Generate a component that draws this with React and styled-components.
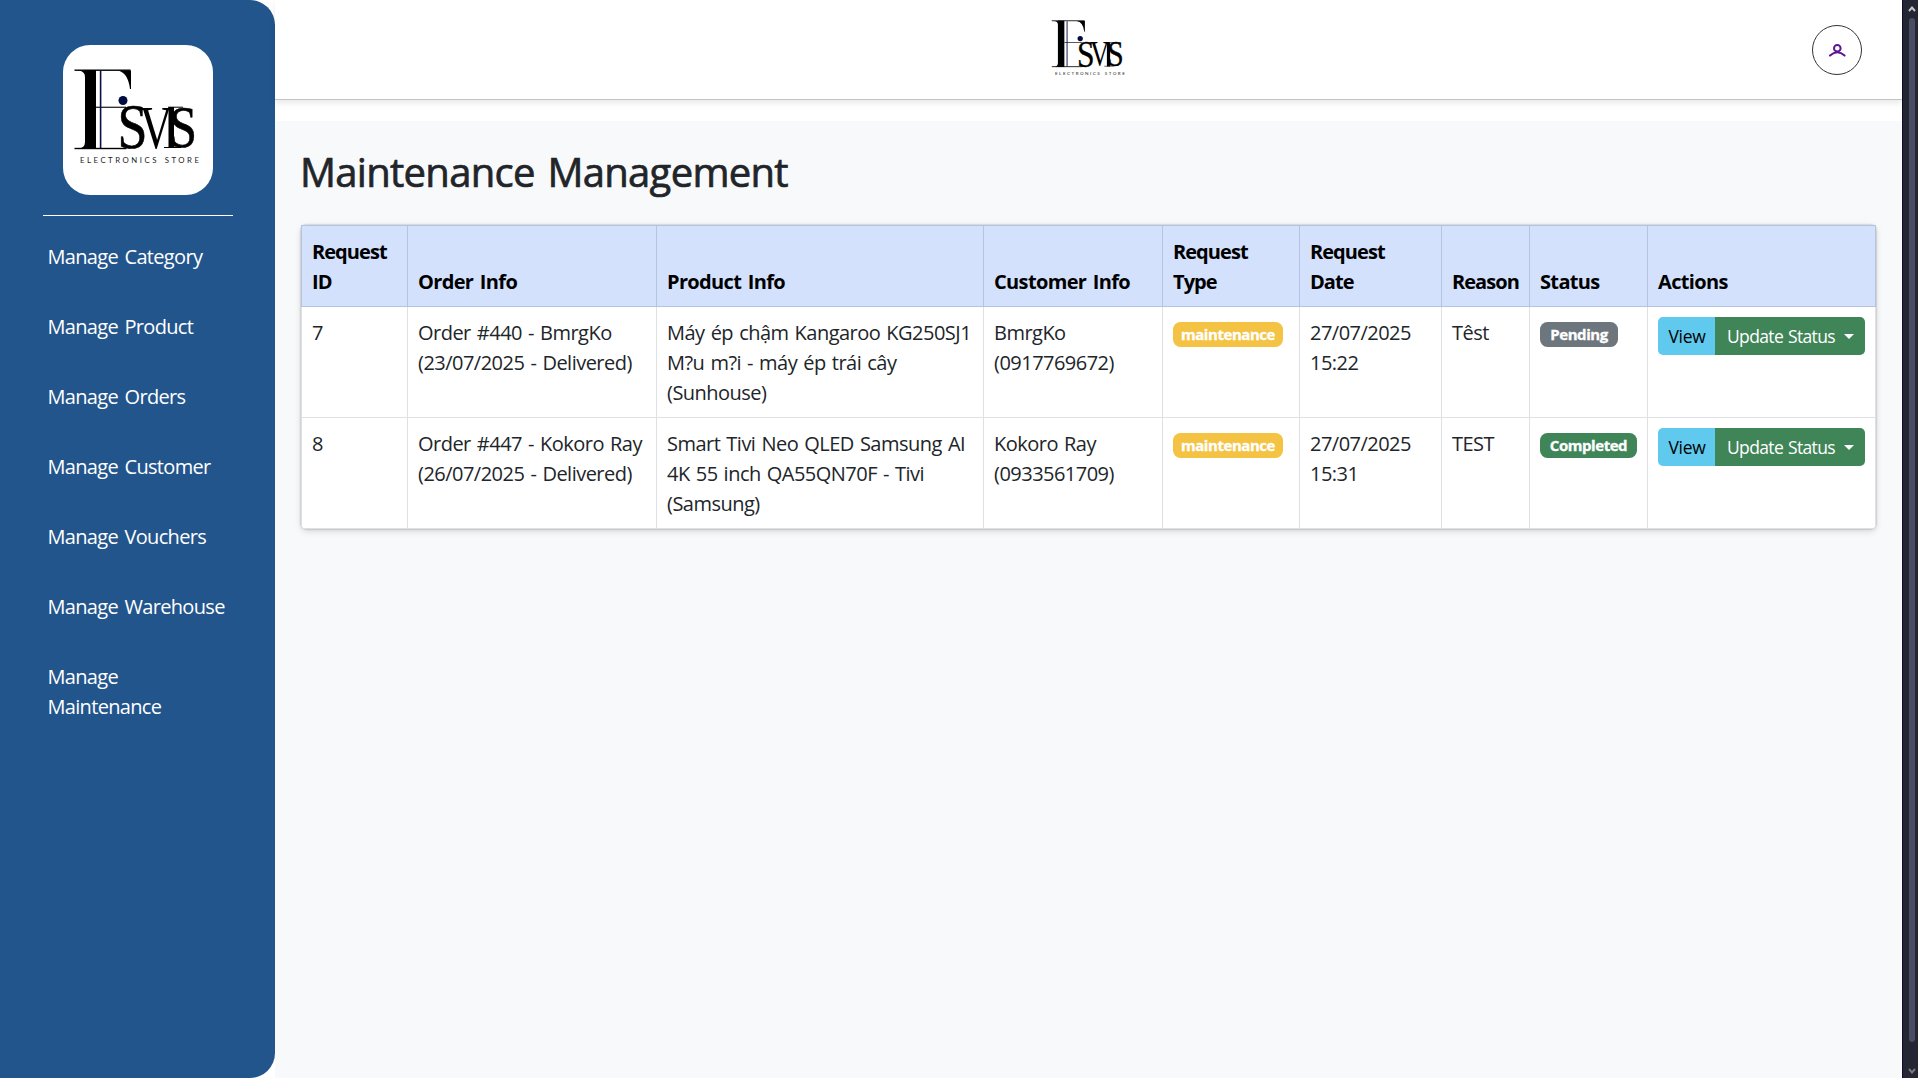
import React from 'react';
import styled, { createGlobalStyle } from 'styled-components';

const GlobalStyle = createGlobalStyle`
  * { box-sizing: border-box; }
  body {
    margin: 0;
    background: #fff;
    color: #212529;
    font: 400 20px/30px "Open Sans", "Noto Sans", sans-serif;
    letter-spacing: -0.52px;
    word-spacing: 1.4px;
    overflow: hidden;
  }
`;

const Shell = styled.div`
  display: flex;
  height: 1078px;
  width: 1918px;
`;

const Sidebar = styled.aside`
  flex: 0 0 275px;
  background: #22558c;
  border-radius: 0 25px 25px 0;
  padding: 45px 42px 0 43px;
  display: flex;
  flex-direction: column;
`;

const LogoCard = styled.div`
  width: 150px;
  height: 150px;
  margin: 0 20px;
  border-radius: 27px;
  background: #fff;
  overflow: hidden;
`;

const Divider = styled.hr`
  width: 190px;
  height: 1px;
  margin: 20px 0 6px;
  border: 0;
  background: #fff;
`;

const Nav = styled.nav`
  display: flex;
  flex-direction: column;
`;

const NavLink = styled.a`
  padding: 20px 5px 20px 4.5px;
  color: #fff;
  text-decoration: none;
  letter-spacing: -0.68px;
  word-spacing: 2px;
`;

const Page = styled.div`
  flex: 1;
  display: flex;
  flex-direction: column;
`;

const Header = styled.header`
  flex: 0 0 100px;
  display: grid;
  grid-template-columns: 1fr 88px 1fr;
  align-items: center;
  background: #fff;
  border-bottom: 1px solid #c4c6c6;
  box-shadow: 0 3px 6px rgba(0, 0, 0, 0.09);
  padding: 0 40px;
`;

const HeaderLogo = styled.div`
  grid-column: 2;
  display: flex;
`;

const UserButton = styled.a`
  justify-self: end;
  width: 50px;
  height: 50px;
  border: 1px solid #333;
  border-radius: 50%;
  display: flex;
  align-items: center;
  justify-content: center;
`;

const Content = styled.main`
  flex: 1;
  margin-top: 21px;
  padding: 27px 26px;
  background: #f8f9fb;
`;

const Title = styled.h1`
  margin: 0 0 29px -1px;
  font-size: 40px;
  line-height: 48px;
  font-weight: 500;
  letter-spacing: -0.7px;
  word-spacing: 3px;
  -webkit-text-stroke: 0.7px #212529;
`;

const Card = styled.div`
  width: 1575px;
  border-radius: 5px;
  background: #fff;
  box-shadow: 0 0 2px rgba(0, 0, 0, 0.38), 0 3px 6px rgba(0, 0, 0, 0.1), 0 0 10px rgba(0, 0, 0, 0.04);
`;

const Table = styled.table`
  width: 1575px;
  table-layout: fixed;
  border-collapse: separate;
  border-spacing: 0;
`;

const Col = styled.col`
  width: ${(p) => p.$w}px;
`;

const HeadCell = styled.th`
  height: 82px;
  padding: 11px 10px 9px 10px;
  text-align: left;
  vertical-align: bottom;
  font-weight: 700;
  letter-spacing: ${(p) => (p.$tight ? '-0.95px' : '-0.65px')};
  word-spacing: 2px;
  color: #000;
  background: #d3e1fd;
  border: solid #b4c3e0;
  border-width: 1px 1px 1px 0;
  &:first-child { border-left-width: 1px; }
`;

const Cell = styled.td`
  height: 111px;
  padding: ${(p) => (p.$controls ? '10px 0 10px 10px' : '11px 0 9px 10px')};
  vertical-align: top;
  white-space: pre-line;
  border: solid #dee0e3;
  border-width: 0 1px 1px 0;
  &:first-child { border-left-width: 1px; }
`;

const tones = { warning: '#f5c344', muted: '#6d757d', success: '#408558' };

const Badge = styled.span`
  display: flex;
  align-items: center;
  justify-content: center;
  width: ${(p) => p.$w}px;
  height: 25px;
  margin-top: 5px;
  border-radius: 7.5px;
  background: ${(p) => tones[p.$tone]};
  color: #fff;
  font-size: 15px;
  font-weight: 700;
  line-height: 15px;
  letter-spacing: -0.45px;
  -webkit-text-stroke: 0.3px #fff;
`;

const ButtonGroup = styled.div`
  display: flex;
  width: 207px;
  height: 38px;
  border-radius: 5px;
  overflow: hidden;
`;

const ViewButton = styled.button`
  width: 57px;
  padding: 0 0 0 1px;
  border: 0;
  background: #5fc9ee;
  color: #000;
  font: inherit;
  font-size: 17.5px;
  letter-spacing: -0.3px;
`;

const UpdateButton = styled(ViewButton)`
  width: 150px;
  padding: 0 11px 0 12px;
  display: flex;
  align-items: center;
  justify-content: space-between;
  background: #408558;
  color: #fff;
  letter-spacing: -0.65px;
  word-spacing: 1px;
`;

const Caret = styled.span`
  border: 5px solid transparent;
  border-top-color: #fff;
  border-bottom: 0;
`;

const Scrollbar = styled.div`
  flex: 0 0 16px;
  display: flex;
  flex-direction: column;
  align-items: center;
  padding: 5px 0 3px 2px;
  background: #242733;
  border-left: 1px solid #0b0d24;
`;

const Thumb = styled.div`
  width: 6px;
  height: 1024px;
  margin: 5px 0 auto;
  border-radius: 3px;
  background: #494d64;
`;

function Logo({ size }) {
  return (
    <svg width={size} height={size} viewBox="0 0 150 150" fill="#000">
      <rect x="22" y="25" width="11" height="79" />
      <rect x="11.5" y="24.5" width="56" height="1.4" />
      <rect x="11.5" y="102.8" width="52" height="1.4" />
      <rect x="33" y="61.7" width="30" height="1.1" />
      <path d="M15 25.5Q22 26 22 32V25.5ZM15 103.5Q22 103 22 97V103.5ZM54 25.5Q65 27 67 44H68V25.5Z" />
      <rect x="36.8" y="26" width="1.6" height="77" fill="#0a0f4a" />
      <circle cx="60" cy="55.5" r="4.5" fill="#030c40" />
      <g fontFamily="Liberation Serif, serif" stroke="#000" letterSpacing="0">
        <text x="54.5" y="103.3" fontSize="63" strokeWidth="0.6" textLength="30" lengthAdjust="spacingAndGlyphs">S</text>
        <text x="76.5" y="102.5" fontSize="61" strokeWidth="0" textLength="33" lengthAdjust="spacingAndGlyphs">V</text>
        <text x="106" y="102" fontSize="60" strokeWidth="0.6" textLength="28" lengthAdjust="spacingAndGlyphs">S</text>
      </g>
      <rect x="105.5" y="62" width="5.5" height="41" />
      <rect x="101" y="102" width="17" height="1" />
      <rect x="105" y="61.7" width="15" height="1" />
      <text x="17" y="117.5" fontFamily="Lato, sans-serif" fontSize="7.8" textLength="120" letterSpacing="1" fill="#222">
        ELECTRONICS STORE
      </text>
    </svg>
  );
}

const navItems = ['Category', 'Product', 'Orders', 'Customer', 'Vouchers', 'Warehouse', 'Maintenance'];

const columns = [
  ['Request ID', 107, true],
  ['Order Info', 249],
  ['Product Info', 327],
  ['Customer Info', 179],
  ['Request Type', 137, true],
  ['Request Date', 142, true],
  ['Reason', 88, true],
  ['Status', 118],
  ['Actions', 228],
];

const requests = [
  {
    id: 7,
    order: 'Order #440 - BmrgKo\n(23/07/2025 - Delivered)',
    product: 'Máy ép chậm Kangaroo KG250SJ1\nM?u m?i - máy ép trái cây\n(Sunhouse)',
    customer: 'BmrgKo\n(0917769672)',
    date: '27/07/2025\n15:22',
    reason: 'Têst',
    status: 'Pending',
    tone: 'muted',
    statusWidth: 78,
  },
  {
    id: 8,
    order: 'Order #447 - Kokoro Ray\n(26/07/2025 - Delivered)',
    product: 'Smart Tivi Neo QLED Samsung AI\n4K 55 inch QA55QN70F - Tivi\n(Samsung)',
    customer: 'Kokoro Ray\n(0933561709)',
    date: '27/07/2025\n15:31',
    reason: 'TEST',
    status: 'Completed',
    tone: 'success',
    statusWidth: 97,
  },
];

export default function App() {
  return (
    <Shell>
      <GlobalStyle />
      <Sidebar>
        <LogoCard><Logo size={150} /></LogoCard>
        <Divider />
        <Nav>
          {navItems.map((n) => <NavLink key={n}>Manage {n}</NavLink>)}
        </Nav>
      </Sidebar>
      <Page>
        <Header>
          <HeaderLogo><Logo size={88} /></HeaderLogo>
          <UserButton>
            <svg width="20" height="20" viewBox="0 0 20 20" fill="none" stroke="#5b1496" strokeWidth="2" strokeLinecap="round">
              <circle cx="10.3" cy="8.3" r="3.3" />
              <path d="M3 15.6Q10.3 8.8 17.6 15.6" />
            </svg>
          </UserButton>
        </Header>
        <Content>
          <Title>Maintenance Management</Title>
          <Card>
            <Table>
              <colgroup>{columns.map(([n, w]) => <Col key={n} $w={w} />)}</colgroup>
              <thead>
                <tr>{columns.map(([n, , tight]) => <HeadCell key={n} $tight={tight}>{n}</HeadCell>)}</tr>
              </thead>
              <tbody>
                {requests.map((r) => (
                  <tr key={r.id}>
                    <Cell>{r.id}</Cell>
                    <Cell>{r.order}</Cell>
                    <Cell>{r.product}</Cell>
                    <Cell>{r.customer}</Cell>
                    <Cell $controls><Badge $w={110} $tone="warning">maintenance</Badge></Cell>
                    <Cell>{r.date}</Cell>
                    <Cell>{r.reason}</Cell>
                    <Cell $controls><Badge $w={r.statusWidth} $tone={r.tone}>{r.status}</Badge></Cell>
                    <Cell $controls>
                      <ButtonGroup>
                        <ViewButton>View</ViewButton>
                        <UpdateButton>Update Status<Caret /></UpdateButton>
                      </ButtonGroup>
                    </Cell>
                  </tr>
                ))}
              </tbody>
            </Table>
          </Card>
        </Content>
      </Page>
      <Scrollbar>
        <svg width="8" height="8" viewBox="0 0 8 8" fill="none" stroke="#c5c5c5" strokeWidth="2"><path d="M1 6L4 2.5L7 6" /></svg>
        <Thumb />
        <svg width="8" height="8" viewBox="0 0 8 8" fill="none" stroke="#77797c" strokeWidth="2"><path d="M1 2L4 5.5L7 2" /></svg>
      </Scrollbar>
    </Shell>
  );
}
